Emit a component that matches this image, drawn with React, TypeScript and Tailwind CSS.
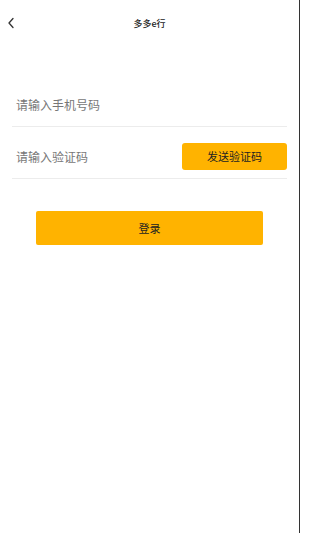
import React from "react";

export default function App() {
  return (
    <div
      className="w-[300px] h-[533px] bg-white border-r border-[#333] flex flex-col"
      style={{ fontFamily: '"Noto Sans CJK SC", "Noto Sans", sans-serif' }}
    >
      <div className="h-[46px] relative flex items-center justify-center">
        <svg
          className="absolute left-[6px] top-[17px]"
          width="10"
          height="12"
          viewBox="0 0 10 12"
          fill="none"
        >
          <path d="M7 1.5 L3 6 L7 10.5" stroke="#333" strokeWidth="1.3" strokeLinecap="round" strokeLinejoin="round" />
        </svg>
        <span className="text-[9px] font-medium text-[#222] leading-none">多多e行</span>
      </div>

      <div className="mt-[29px] mx-3">
        <div className="h-[52px] pt-2 flex items-center border-b border-[#ececec] px-1">
          <span className="text-[12px] text-[#777] leading-none">请输入手机号码</span>
        </div>
        <div className="h-[52px] pt-2 flex items-center justify-between border-b border-[#ececec] pl-1">
          <span className="text-[12px] text-[#777] leading-none">请输入验证码</span>
          <button className="w-[105px] h-[27px] rounded-[3px] bg-[#ffb300] text-[11px] text-[#222] leading-none flex items-center justify-center">
            发送验证码
          </button>
        </div>
      </div>

      <button className="mt-8 mx-9 h-[34px] rounded-[2px] bg-[#ffb300] text-[11px] text-[#222] leading-none flex items-center justify-center">
        登录
      </button>
    </div>
  );
}
